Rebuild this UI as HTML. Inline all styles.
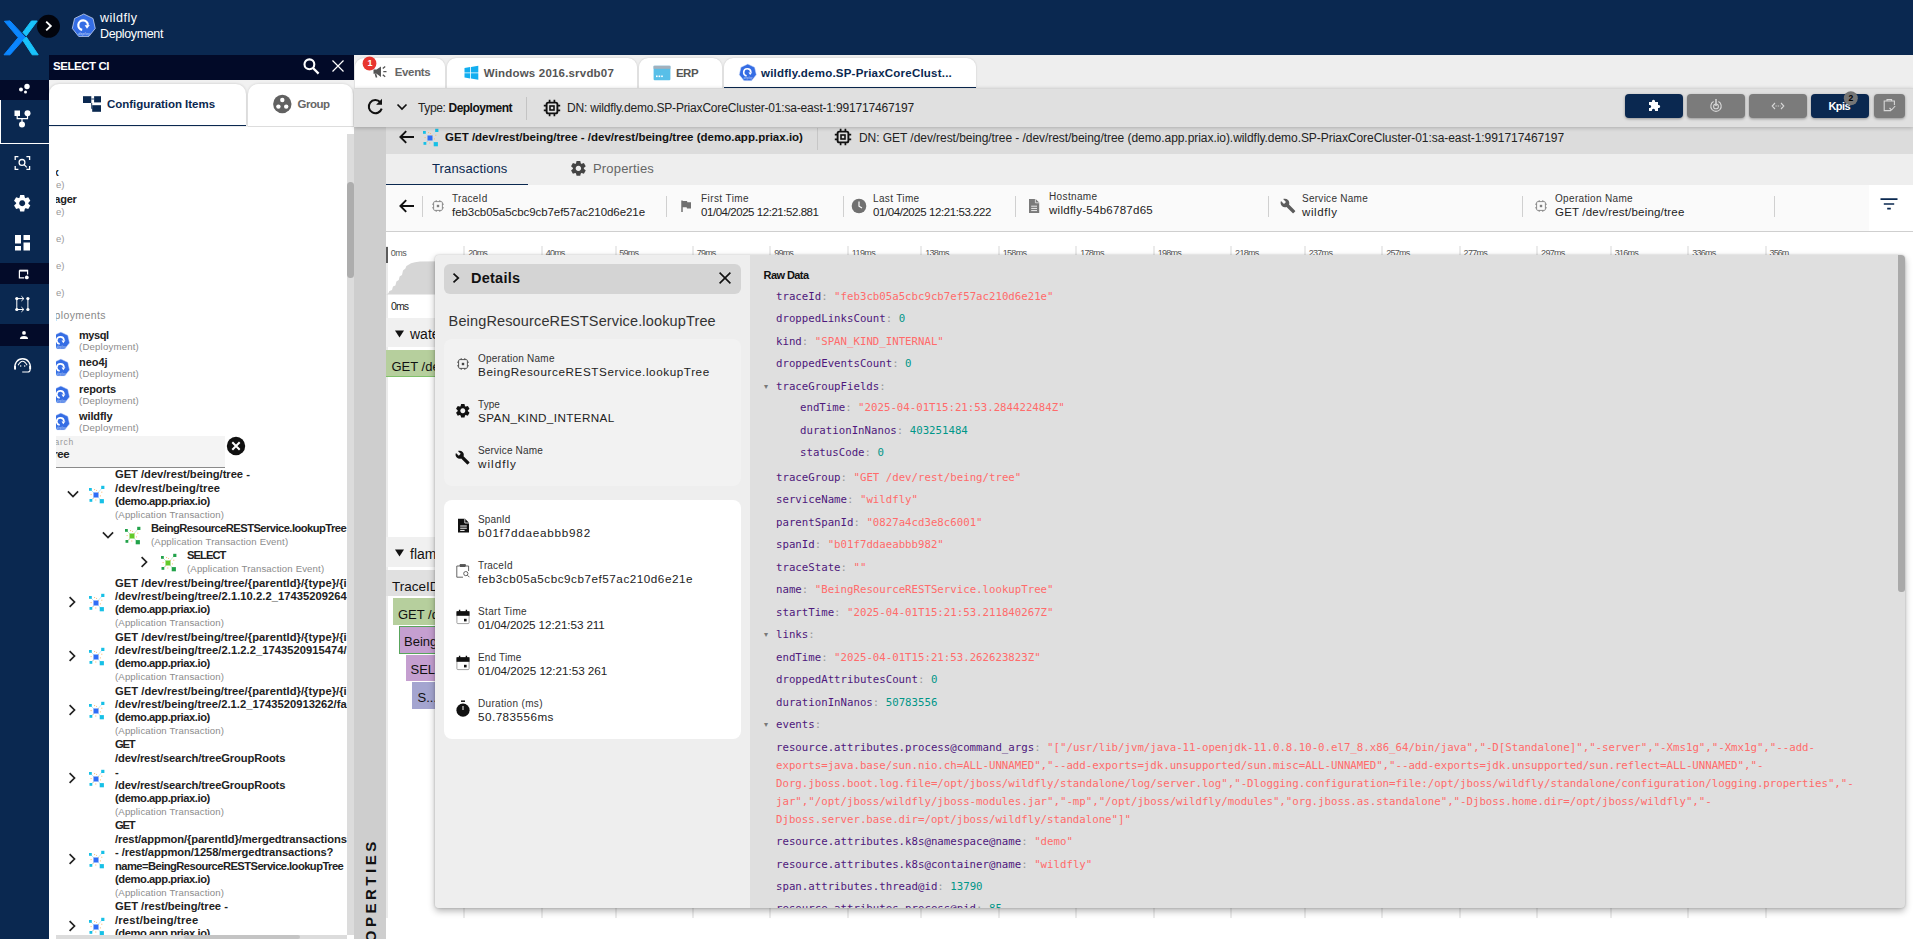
<!DOCTYPE html>
<html lang="en"><head><meta charset="utf-8"><title>wildfly Deployment</title><style>
html,body{margin:0;padding:0}
body{width:1913px;height:939px;overflow:hidden;position:relative;background:#fff;font-family:"Liberation Sans",sans-serif;color:#222}
.a{position:absolute}
.t{position:absolute;white-space:nowrap}
.clip{position:absolute;overflow:hidden}
</style></head><body>
<div class="a" style="left:0px;top:0px;width:1913px;height:55px;background:#0a2850;"></div>
<div class="a" style="left:0px;top:55px;width:49px;height:884px;background:#0a2850;"></div>
<div class="a" style="left:0px;top:79.5px;width:49px;height:20.0px;background:#030b29;"></div>
<div class="a" style="left:0px;top:263px;width:49px;height:21.30000000000001px;background:#030b29;"></div>
<div class="a" style="left:0px;top:324px;width:49px;height:22px;background:#030b29;"></div>
<div class="a" style="left:0px;top:99.5px;width:1px;height:44.5px;background:#fff;"></div>
<div class="a" style="left:0px;top:143px;width:49px;height:1px;background:#fff;"></div>
<svg class="a" style="left:0px;top:16px;" width="44" height="44" viewBox="0 0 44 44"><g stroke-width="1" stroke-linejoin="round"><path d="M4.4 5.3 L10 4.9 L25.4 21.4 L10 38.8 L4 38.8 L18.2 21.6 Z" fill="#0b86ff" stroke="#0b86ff"/><path d="M31.4 5 L37.2 5 L26.2 19.9 L22.9 16.4 Z" fill="#19c3fb" stroke="#19c3fb"/><path d="M22.9 24.4 L26.3 21 L38.2 38.8 L32.2 38.8 Z" fill="#19c3fb" stroke="#19c3fb"/></g></svg>
<svg class="a" style="left:36px;top:14px;" width="25" height="25" viewBox="0 0 25 25"><circle cx="12.5" cy="12.3" r="11.5" fill="#02040c"/><path d="M10.2 7.6 L14.8 12 L10.2 16.4" fill="none" stroke="#fff" stroke-width="1.9"/></svg>
<svg class="a" style="left:70.7px;top:13.2px;" width="25.6" height="25.6" viewBox="0 0 25.6 25.6"><polygon points="12.80,1.00 22.03,5.44 24.30,15.43 17.92,23.43 7.68,23.43 1.30,15.43 3.57,5.44" fill="#356de4" stroke="#dbe5fb" stroke-width="0.70" stroke-linejoin="round"/><g transform="translate(12.8,12.8) scale(1.0000)"><path d="M-1.6 4.1 A4.8 4.8 0 1 1 4.1 -0.9" fill="none" stroke="#fff" stroke-width="2.2"/><path d="M0.9 -0.5 L6 -0.8 L3.2 3 Z" fill="#fff"/><text x="0.2" y="8.9" text-anchor="middle" font-family="Liberation Sans,sans-serif" font-size="3.7" font-weight="700" font-style="italic" fill="#a9c0f3">deploy</text></g></svg>
<div class="t" style="left:100px;top:12.12px;font-size:12.5px;line-height:12.5px;color:#fff;letter-spacing:0.495px;">wildfly</div>
<div class="t" style="left:100px;top:28.12px;font-size:12.5px;line-height:12.5px;color:#fff;letter-spacing:-0.370px;">Deployment</div>
<svg class="a" style="left:14px;top:80px;" width="20" height="18" viewBox="0 0 20 18"><circle cx="13" cy="6.5" r="2.7" fill="#fff"/><circle cx="7" cy="9.5" r="2" fill="#fff"/><circle cx="11.5" cy="12" r="1.5" fill="#fff"/></svg>
<svg class="a" style="left:12px;top:108px;" width="24" height="24" viewBox="0 0 24 24"><rect x="2.5" y="2.5" width="5.5" height="5.5" fill="#fff"/><circle cx="15.5" cy="5.2" r="3" fill="#fff"/><circle cx="10" cy="16.5" r="3" fill="#fff"/><path d="M5.2 8 V10.6 H15.5 V8 M10 10.6 V14" fill="none" stroke="#fff" stroke-width="1.2"/></svg>
<svg class="a" style="left:14px;top:155px;" width="17" height="16" viewBox="0 0 17 16"><g fill="none" stroke="#fff" stroke-width="1.3"><path d="M1.2 5 V1.6 H4.4 M12.4 1.6 H15.6 V5 M15.6 11 V14.4 H12.4 M4.4 14.4 H1.2 V11"/><circle cx="8" cy="7.4" r="2.9"/><path d="M10.1 9.6 L12.8 12.4"/></g></svg>
<svg class="a" style="left:13.3px;top:193.8px;" width="18.4" height="18.4" viewBox="0 0 18.4 18.4"><g transform="translate(9.2,9.2)"><path d="M-2.79 -4.92 L-2.05 -8.20 L2.05 -8.20 L2.79 -4.92 Z" transform="rotate(0)" fill="#fff"/><path d="M-2.79 -4.92 L-2.05 -8.20 L2.05 -8.20 L2.79 -4.92 Z" transform="rotate(60)" fill="#fff"/><path d="M-2.79 -4.92 L-2.05 -8.20 L2.05 -8.20 L2.79 -4.92 Z" transform="rotate(120)" fill="#fff"/><path d="M-2.79 -4.92 L-2.05 -8.20 L2.05 -8.20 L2.79 -4.92 Z" transform="rotate(180)" fill="#fff"/><path d="M-2.79 -4.92 L-2.05 -8.20 L2.05 -8.20 L2.79 -4.92 Z" transform="rotate(240)" fill="#fff"/><path d="M-2.79 -4.92 L-2.05 -8.20 L2.05 -8.20 L2.79 -4.92 Z" transform="rotate(300)" fill="#fff"/><path fill-rule="evenodd" fill="#fff" d="M0 -6.07 A6.07 6.07 0 1 0 0.01 -6.07 Z M0 -2.95 A2.95 2.95 0 1 1 -0.01 -2.95 Z"/></g></svg>
<svg class="a" style="left:14px;top:234px;" width="18" height="18" viewBox="0 0 18 18"><rect x="1" y="1" width="6" height="8.5" fill="#fff"/><rect x="9.5" y="1" width="6.5" height="5" fill="#fff"/><rect x="1" y="12" width="6" height="4.5" fill="#fff"/><rect x="9.5" y="8.5" width="6.5" height="8" fill="#fff"/></svg>
<svg class="a" style="left:18px;top:268.5px;" width="12" height="11" viewBox="0 0 12 11"><path d="M1.4 1.4 H9.6 V5.4 M1.4 1.4 V8.8 H6.2" fill="none" stroke="#fff" stroke-width="1.2"/><rect x="1.4" y="0.9" width="8.2" height="1.7" fill="#fff"/><circle cx="8.8" cy="8.4" r="1.9" fill="#fff"/></svg>
<svg class="a" style="left:13px;top:294px;" width="20" height="20" viewBox="0 0 20 20"><g fill="#fff"><circle cx="3.8" cy="4.6" r="1.6"/><circle cx="3.8" cy="15.5" r="1.6"/><circle cx="14.9" cy="4.6" r="1.6"/><circle cx="14.9" cy="15.5" r="1.6"/></g><g stroke="#fff" fill="none"><path d="M3.8 4.6 V15.5 M14.9 4.6 V15.5" stroke-width="1"/><path d="M3.8 4.6 H10.6 M8.4 2.2 L10.9 4.6 L8.4 7" stroke-width="1"/><path d="M3.8 15.5 H10.6 M8.4 13.1 L10.9 15.5 L8.4 17.9" stroke-width="1"/></g></svg>
<svg class="a" style="left:19px;top:329.5px;" width="10" height="10" viewBox="0 0 10 10"><circle cx="5" cy="2.9" r="1.9" fill="#fff"/><path d="M0.9 9 Q0.9 6 5 6 Q9.1 6 9.1 9 Z" fill="#fff"/></svg>
<svg class="a" style="left:12px;top:355px;" width="22" height="22" viewBox="0 0 22 22"><g fill="none" stroke="#fff"><path d="M3.2 13.6 A7.7 7.7 0 1 1 18 13.6" stroke-width="1.3"/><path d="M6.1 10.3 Q10.6 2.2 15.1 10.3" stroke-width="1.1"/><path d="M18.1 14.4 Q18.1 17 15.8 17 H10.2" stroke-width="1.1"/></g><rect x="2.1" y="10.8" width="1.9" height="4" rx="0.8" fill="#fff"/><rect x="17.2" y="10.8" width="1.9" height="4" rx="0.8" fill="#fff"/><circle cx="8.7" cy="11.1" r="0.75" fill="#fff"/><circle cx="12.7" cy="11.1" r="0.75" fill="#fff"/></svg>
<div class="a" style="left:49px;top:55px;width:305px;height:25px;background:#020a28;"></div>
<div class="t" style="left:53px;top:60.81px;font-size:11.5px;line-height:11.5px;color:#fff;font-weight:700;letter-spacing:-0.451px;">SELECT CI</div>
<svg class="a" style="left:301px;top:57px;" width="20" height="20" viewBox="0 0 20 20"><circle cx="8.4" cy="7.3" r="4.9" fill="none" stroke="#fff" stroke-width="2.1"/><path d="M12 11 L17.6 16.6" stroke="#fff" stroke-width="2.3"/></svg>
<svg class="a" style="left:330px;top:58px;" width="16" height="16" viewBox="0 0 16 16"><path d="M2.5 2.5 L13.5 13.5 M13.5 2.5 L2.5 13.5" stroke="#fff" stroke-width="1.2"/></svg>
<div class="a" style="left:49px;top:80px;width:305px;height:859px;background:#fff;"></div>
<div class="a" style="left:49px;top:80px;width:305px;height:47px;background:#f1f1f1;"></div>
<div class="a" style="left:49px;top:84px;width:197px;height:41px;background:#fff;border-top-right-radius:10px;border-top-left-radius:10px;box-shadow:0 0 3px rgba(0,0,0,.18);"></div>
<div class="a" style="left:49px;top:125px;width:197px;height:1px;background:#0a2850;"></div>
<div class="a" style="left:248px;top:84px;width:105px;height:42px;background:#fff;border-top-left-radius:10px;border-top-right-radius:10px;box-shadow:0 0 3px rgba(0,0,0,.15);"></div>
<div class="a" style="left:248px;top:126px;width:106px;height:1px;background:#ddd;"></div>
<div class="a" style="left:49px;top:127px;width:305px;height:6px;background:#fff;"></div>
<svg class="a" style="left:82px;top:95px;" width="20" height="18" viewBox="0 0 20 18"><rect x="1" y="1.2" width="8.3" height="6.8" fill="#0a2850"/><rect x="12.1" y="1.2" width="6.9" height="6.2" fill="#0a2850"/><rect x="10.2" y="10.2" width="8.8" height="6.6" fill="#0a2850"/><path d="M9.3 4 H12.1 M9.7 8 V13.6 H10.4" fill="none" stroke="#0a2850" stroke-width="0.9"/></svg>
<div class="t" style="left:107px;top:98.81px;font-size:11.5px;line-height:11.5px;color:#0a2850;font-weight:700;letter-spacing:-0.032px;">Configuration Items</div>
<svg class="a" style="left:272px;top:94px;" width="20" height="20" viewBox="0 0 20 20"><circle cx="10.3" cy="10" r="9.2" fill="#616161"/><circle cx="10.3" cy="6" r="2.2" fill="#fff"/><circle cx="6.4" cy="12.6" r="2.2" fill="#fff"/><circle cx="14.2" cy="12.6" r="2.2" fill="#fff"/></svg>
<div class="t" style="left:297.4px;top:98.81px;font-size:11.5px;line-height:11.5px;color:#666;font-weight:700;letter-spacing:-0.459px;">Group</div>
<div class="a" style="left:347px;top:134px;width:7px;height:801px;background:#dcdcdc;"></div>
<div class="a" style="left:347px;top:182px;width:7px;height:96px;background:#adadad;border-radius:3.5px;"></div>
<div class="a" style="left:56px;top:935px;width:291px;height:4px;background:#dcdcdc;"></div>
<div class="a" style="left:184px;top:935px;width:116px;height:4px;background:#c4c4c4;border-radius:2px;"></div>
<div class="clip" style="left:56px;top:130px;width:291px;height:805px;">
<div class="t" style="left:-3.299999999999997px;top:37.10px;font-size:11px;line-height:11px;color:#222;font-weight:700;">x</div>
<div class="t" style="left:0px;top:50.32px;font-size:9.6px;line-height:9.6px;color:#999;">e)</div>
<div class="t" style="left:-1.7000000000000028px;top:64.10px;font-size:11px;line-height:11px;color:#222;font-weight:700;letter-spacing:-0.234px;">ager</div>
<div class="t" style="left:0px;top:77.32px;font-size:9.6px;line-height:9.6px;color:#999;">e)</div>
<div class="t" style="left:0px;top:104.32px;font-size:9.6px;line-height:9.6px;color:#999;">e)</div>
<div class="t" style="left:0px;top:131.32px;font-size:9.6px;line-height:9.6px;color:#999;">e)</div>
<div class="t" style="left:0px;top:158.32px;font-size:9.6px;line-height:9.6px;color:#999;">e)</div>
<div class="t" style="left:-1.3999999999999986px;top:179.69px;font-size:10.5px;line-height:10.5px;color:#888;letter-spacing:0.372px;">ployments</div>
<div class="t" style="left:23px;top:199.80px;font-size:11px;line-height:11px;color:#222;font-weight:700;letter-spacing:-0.458px;">mysql</div>
<div class="t" style="left:23px;top:212.12px;font-size:9.6px;line-height:9.6px;color:#8c8c8c;letter-spacing:0.198px;">(Deployment)</div>
<div class="t" style="left:23px;top:226.80px;font-size:11px;line-height:11px;color:#222;font-weight:700;letter-spacing:-0.046px;">neo4j</div>
<div class="t" style="left:23px;top:239.12px;font-size:9.6px;line-height:9.6px;color:#8c8c8c;letter-spacing:0.198px;">(Deployment)</div>
<div class="t" style="left:23px;top:253.80px;font-size:11px;line-height:11px;color:#222;font-weight:700;letter-spacing:-0.128px;">reports</div>
<div class="t" style="left:23px;top:266.12px;font-size:9.6px;line-height:9.6px;color:#8c8c8c;letter-spacing:0.198px;">(Deployment)</div>
<div class="t" style="left:23px;top:280.80px;font-size:11px;line-height:11px;color:#222;font-weight:700;letter-spacing:-0.104px;">wildfly</div>
<div class="t" style="left:23px;top:293.12px;font-size:9.6px;line-height:9.6px;color:#8c8c8c;letter-spacing:0.198px;">(Deployment)</div>
</div>
<div class="clip" style="left:56px;top:325px;width:20px;height:115px;">
<svg class="a" style="left:-5.100000000000003px;top:6.1px;" width="19.8" height="19.8" viewBox="0 0 19.8 19.8"><polygon points="9.90,1.00 16.86,4.35 18.58,11.88 13.76,17.92 6.04,17.92 1.22,11.88 2.94,4.35" fill="#356de4" stroke="#dbe5fb" stroke-width="0.53" stroke-linejoin="round"/><g transform="translate(9.9,9.9) scale(0.7542)"><path d="M-1.6 4.1 A4.8 4.8 0 1 1 4.1 -0.9" fill="none" stroke="#fff" stroke-width="2.2"/><path d="M0.9 -0.5 L6 -0.8 L3.2 3 Z" fill="#fff"/><text x="0.2" y="8.9" text-anchor="middle" font-family="Liberation Sans,sans-serif" font-size="3.7" font-weight="700" font-style="italic" fill="#a9c0f3">deploy</text></g></svg>
<svg class="a" style="left:-5.100000000000003px;top:33.1px;" width="19.8" height="19.8" viewBox="0 0 19.8 19.8"><polygon points="9.90,1.00 16.86,4.35 18.58,11.88 13.76,17.92 6.04,17.92 1.22,11.88 2.94,4.35" fill="#356de4" stroke="#dbe5fb" stroke-width="0.53" stroke-linejoin="round"/><g transform="translate(9.9,9.9) scale(0.7542)"><path d="M-1.6 4.1 A4.8 4.8 0 1 1 4.1 -0.9" fill="none" stroke="#fff" stroke-width="2.2"/><path d="M0.9 -0.5 L6 -0.8 L3.2 3 Z" fill="#fff"/><text x="0.2" y="8.9" text-anchor="middle" font-family="Liberation Sans,sans-serif" font-size="3.7" font-weight="700" font-style="italic" fill="#a9c0f3">deploy</text></g></svg>
<svg class="a" style="left:-5.100000000000003px;top:60.1px;" width="19.8" height="19.8" viewBox="0 0 19.8 19.8"><polygon points="9.90,1.00 16.86,4.35 18.58,11.88 13.76,17.92 6.04,17.92 1.22,11.88 2.94,4.35" fill="#356de4" stroke="#dbe5fb" stroke-width="0.53" stroke-linejoin="round"/><g transform="translate(9.9,9.9) scale(0.7542)"><path d="M-1.6 4.1 A4.8 4.8 0 1 1 4.1 -0.9" fill="none" stroke="#fff" stroke-width="2.2"/><path d="M0.9 -0.5 L6 -0.8 L3.2 3 Z" fill="#fff"/><text x="0.2" y="8.9" text-anchor="middle" font-family="Liberation Sans,sans-serif" font-size="3.7" font-weight="700" font-style="italic" fill="#a9c0f3">deploy</text></g></svg>
<svg class="a" style="left:-5.100000000000003px;top:87.1px;" width="19.8" height="19.8" viewBox="0 0 19.8 19.8"><polygon points="9.90,1.00 16.86,4.35 18.58,11.88 13.76,17.92 6.04,17.92 1.22,11.88 2.94,4.35" fill="#356de4" stroke="#dbe5fb" stroke-width="0.53" stroke-linejoin="round"/><g transform="translate(9.9,9.9) scale(0.7542)"><path d="M-1.6 4.1 A4.8 4.8 0 1 1 4.1 -0.9" fill="none" stroke="#fff" stroke-width="2.2"/><path d="M0.9 -0.5 L6 -0.8 L3.2 3 Z" fill="#fff"/><text x="0.2" y="8.9" text-anchor="middle" font-family="Liberation Sans,sans-serif" font-size="3.7" font-weight="700" font-style="italic" fill="#a9c0f3">deploy</text></g></svg>
</div>
<div class="a" style="left:56px;top:436px;width:169px;height:31px;background:#f4f4f4;"></div>
<div class="a" style="left:56px;top:467px;width:169px;height:1px;background:#8a8a8a;"></div>
<div class="clip" style="left:56px;top:436px;width:169px;height:31px;">
<div class="t" style="left:-1.3999999999999986px;top:2.46px;font-size:8.5px;line-height:8.5px;color:#999;letter-spacing:0.716px;">arch</div>
<div class="t" style="left:-2.700000000000003px;top:12.81px;font-size:11.5px;line-height:11.5px;color:#222;font-weight:700;letter-spacing:-0.422px;">ree</div>
</div>
<svg class="a" style="left:226px;top:436px;" width="20" height="20" viewBox="0 0 20 20"><circle cx="10" cy="10" r="9.2" fill="#111"/><path d="M6.3 6.3 L13.7 13.7 M13.7 6.3 L6.3 13.7" stroke="#fff" stroke-width="2"/></svg>
<div class="clip" style="left:49px;top:468px;width:298px;height:467px;">
<svg class="a" style="left:16.5px;top:18.899999999999977px;" width="14" height="14" viewBox="0 0 14 14"><path d="M1.9 4.4 L7 9.5 L12.1 4.4" fill="none" stroke="#222" stroke-width="1.7"/></svg>
<svg class="a" style="left:36.80000000000001px;top:17.399999999999977px;" width="20" height="20" viewBox="0 0 20 20"><g stroke="#aee3f6" stroke-width="0.8"><path d="M10 10 L4.4 4.4 M10 10 L16.8 2.2 M10 10 L4.9 15.4 M10 10 L15.8 16.2"/></g><g fill="#17c0e6"><rect x="3.00" y="3.00" width="2.8" height="2.8"/><rect x="15.20" y="0.80" width="3.2" height="3.2"/><rect x="3.50" y="14.00" width="2.8" height="2.8"/><rect x="13.70" y="14.10" width="4.2" height="4.2"/></g><g fill="#2f6df6"><rect x="7.50" y="7.50" width="5" height="5"/></g><g fill="#f9b56b"><rect x="8.10" y="4.10" width="1" height="1"/><rect x="10.15" y="4.95" width="0.9" height="0.9"/><rect x="4.60" y="9.10" width="1" height="1"/><rect x="15.30" y="6.70" width="1" height="1"/><rect x="13.90" y="10.40" width="1" height="1"/><rect x="9.30" y="14.50" width="1" height="1"/><rect x="6.80" y="13.20" width="0.8" height="0.8"/><rect x="12.20" y="7.00" width="0.8" height="0.8"/></g></svg>
<div class="t" style="left:66px;top:1.48px;font-size:11.2px;line-height:11.2px;color:#222;font-weight:700;letter-spacing:-0.026px;">GET /dev/rest/being/tree -</div>
<div class="t" style="left:66px;top:15.28px;font-size:11.2px;line-height:11.2px;color:#222;font-weight:700;letter-spacing:0.130px;">/dev/rest/being/tree</div>
<div class="t" style="left:66px;top:28.38px;font-size:11.2px;line-height:11.2px;color:#222;font-weight:700;letter-spacing:-0.437px;">(demo.app.priax.io)</div>
<div class="t" style="left:66px;top:41.92px;font-size:9.6px;line-height:9.6px;color:#8c8c8c;letter-spacing:0.142px;">(Application Transaction)</div>
<svg class="a" style="left:52.3px;top:59.89999999999998px;" width="14" height="14" viewBox="0 0 14 14"><path d="M1.9 4.4 L7 9.5 L12.1 4.4" fill="none" stroke="#222" stroke-width="1.7"/></svg>
<svg class="a" style="left:73.4px;top:57.5px;" width="20" height="20" viewBox="0 0 20 20"><g stroke="#b9e6c0" stroke-width="0.8"><path d="M10 10 L4.4 4.4 M10 10 L16.8 2.2 M10 10 L4.9 15.4 M10 10 L15.8 16.2"/></g><g fill="#22a24a"><rect x="3.00" y="3.00" width="2.8" height="2.8"/><rect x="15.20" y="0.80" width="3.2" height="3.2"/><rect x="3.50" y="14.00" width="2.8" height="2.8"/><rect x="13.70" y="14.10" width="4.2" height="4.2"/></g><g fill="#63c928"><rect x="7.50" y="7.50" width="5" height="5"/></g><g fill="#f9b56b"><rect x="8.10" y="4.10" width="1" height="1"/><rect x="10.15" y="4.95" width="0.9" height="0.9"/><rect x="4.60" y="9.10" width="1" height="1"/><rect x="15.30" y="6.70" width="1" height="1"/><rect x="13.90" y="10.40" width="1" height="1"/><rect x="9.30" y="14.50" width="1" height="1"/><rect x="6.80" y="13.20" width="0.8" height="0.8"/><rect x="12.20" y="7.00" width="0.8" height="0.8"/></g></svg>
<div class="t" style="left:102px;top:55.48px;font-size:11.2px;line-height:11.2px;color:#222;font-weight:700;letter-spacing:-0.556px;">BeingResourceRESTService.lookupTree</div>
<div class="t" style="left:102px;top:68.72px;font-size:9.6px;line-height:9.6px;color:#8c8c8c;letter-spacing:0.143px;">(Application Transaction Event)</div>
<svg class="a" style="left:88.30000000000001px;top:87.20000000000005px;" width="14" height="14" viewBox="0 0 14 14"><path d="M4.6 2.2 L9.5 7 L4.6 11.8" fill="none" stroke="#222" stroke-width="1.7"/></svg>
<svg class="a" style="left:109.1px;top:84.70000000000005px;" width="20" height="20" viewBox="0 0 20 20"><g stroke="#b9e6c0" stroke-width="0.8"><path d="M10 10 L4.4 4.4 M10 10 L16.8 2.2 M10 10 L4.9 15.4 M10 10 L15.8 16.2"/></g><g fill="#22a24a"><rect x="3.00" y="3.00" width="2.8" height="2.8"/><rect x="15.20" y="0.80" width="3.2" height="3.2"/><rect x="3.50" y="14.00" width="2.8" height="2.8"/><rect x="13.70" y="14.10" width="4.2" height="4.2"/></g><g fill="#63c928"><rect x="7.50" y="7.50" width="5" height="5"/></g><g fill="#f9b56b"><rect x="8.10" y="4.10" width="1" height="1"/><rect x="10.15" y="4.95" width="0.9" height="0.9"/><rect x="4.60" y="9.10" width="1" height="1"/><rect x="15.30" y="6.70" width="1" height="1"/><rect x="13.90" y="10.40" width="1" height="1"/><rect x="9.30" y="14.50" width="1" height="1"/><rect x="6.80" y="13.20" width="0.8" height="0.8"/><rect x="12.20" y="7.00" width="0.8" height="0.8"/></g></svg>
<div class="t" style="left:138px;top:82.48px;font-size:11.2px;line-height:11.2px;color:#222;font-weight:700;letter-spacing:-0.947px;">SELECT</div>
<div class="t" style="left:138px;top:95.82px;font-size:9.6px;line-height:9.6px;color:#8c8c8c;letter-spacing:0.143px;">(Application Transaction Event)</div>
<svg class="a" style="left:16.0px;top:126.89999999999998px;" width="14" height="14" viewBox="0 0 14 14"><path d="M4.6 2.2 L9.5 7 L4.6 11.8" fill="none" stroke="#222" stroke-width="1.7"/></svg>
<svg class="a" style="left:37.0px;top:125px;" width="20" height="20" viewBox="0 0 20 20"><g stroke="#aee3f6" stroke-width="0.8"><path d="M10 10 L4.4 4.4 M10 10 L16.8 2.2 M10 10 L4.9 15.4 M10 10 L15.8 16.2"/></g><g fill="#17c0e6"><rect x="3.00" y="3.00" width="2.8" height="2.8"/><rect x="15.20" y="0.80" width="3.2" height="3.2"/><rect x="3.50" y="14.00" width="2.8" height="2.8"/><rect x="13.70" y="14.10" width="4.2" height="4.2"/></g><g fill="#2f6df6"><rect x="7.50" y="7.50" width="5" height="5"/></g><g fill="#f9b56b"><rect x="8.10" y="4.10" width="1" height="1"/><rect x="10.15" y="4.95" width="0.9" height="0.9"/><rect x="4.60" y="9.10" width="1" height="1"/><rect x="15.30" y="6.70" width="1" height="1"/><rect x="13.90" y="10.40" width="1" height="1"/><rect x="9.30" y="14.50" width="1" height="1"/><rect x="6.80" y="13.20" width="0.8" height="0.8"/><rect x="12.20" y="7.00" width="0.8" height="0.8"/></g></svg>
<div class="t" style="left:66px;top:109.58px;font-size:11.2px;line-height:11.2px;color:#222;font-weight:700;letter-spacing:0.038px;">GET /dev/rest/being/tree/{parentId}/{type}/{i</div>
<div class="t" style="left:66px;top:123.38px;font-size:11.2px;line-height:11.2px;color:#222;font-weight:700;letter-spacing:0.038px;">/dev/rest/being/tree/2.1.10.2.2_17435209264</div>
<div class="t" style="left:66px;top:136.28px;font-size:11.2px;line-height:11.2px;color:#222;font-weight:700;letter-spacing:-0.437px;">(demo.app.priax.io)</div>
<div class="t" style="left:66px;top:149.82px;font-size:9.6px;line-height:9.6px;color:#8c8c8c;letter-spacing:0.142px;">(Application Transaction)</div>
<svg class="a" style="left:16.0px;top:180.89999999999998px;" width="14" height="14" viewBox="0 0 14 14"><path d="M4.6 2.2 L9.5 7 L4.6 11.8" fill="none" stroke="#222" stroke-width="1.7"/></svg>
<svg class="a" style="left:37.0px;top:179px;" width="20" height="20" viewBox="0 0 20 20"><g stroke="#aee3f6" stroke-width="0.8"><path d="M10 10 L4.4 4.4 M10 10 L16.8 2.2 M10 10 L4.9 15.4 M10 10 L15.8 16.2"/></g><g fill="#17c0e6"><rect x="3.00" y="3.00" width="2.8" height="2.8"/><rect x="15.20" y="0.80" width="3.2" height="3.2"/><rect x="3.50" y="14.00" width="2.8" height="2.8"/><rect x="13.70" y="14.10" width="4.2" height="4.2"/></g><g fill="#2f6df6"><rect x="7.50" y="7.50" width="5" height="5"/></g><g fill="#f9b56b"><rect x="8.10" y="4.10" width="1" height="1"/><rect x="10.15" y="4.95" width="0.9" height="0.9"/><rect x="4.60" y="9.10" width="1" height="1"/><rect x="15.30" y="6.70" width="1" height="1"/><rect x="13.90" y="10.40" width="1" height="1"/><rect x="9.30" y="14.50" width="1" height="1"/><rect x="6.80" y="13.20" width="0.8" height="0.8"/><rect x="12.20" y="7.00" width="0.8" height="0.8"/></g></svg>
<div class="t" style="left:66px;top:163.58px;font-size:11.2px;line-height:11.2px;color:#222;font-weight:700;letter-spacing:0.038px;">GET /dev/rest/being/tree/{parentId}/{type}/{i</div>
<div class="t" style="left:66px;top:177.38px;font-size:11.2px;line-height:11.2px;color:#222;font-weight:700;letter-spacing:0.038px;">/dev/rest/being/tree/2.1.2.2_1743520915474/</div>
<div class="t" style="left:66px;top:190.28px;font-size:11.2px;line-height:11.2px;color:#222;font-weight:700;letter-spacing:-0.437px;">(demo.app.priax.io)</div>
<div class="t" style="left:66px;top:203.82px;font-size:9.6px;line-height:9.6px;color:#8c8c8c;letter-spacing:0.142px;">(Application Transaction)</div>
<svg class="a" style="left:16.0px;top:234.89999999999998px;" width="14" height="14" viewBox="0 0 14 14"><path d="M4.6 2.2 L9.5 7 L4.6 11.8" fill="none" stroke="#222" stroke-width="1.7"/></svg>
<svg class="a" style="left:37.0px;top:233px;" width="20" height="20" viewBox="0 0 20 20"><g stroke="#aee3f6" stroke-width="0.8"><path d="M10 10 L4.4 4.4 M10 10 L16.8 2.2 M10 10 L4.9 15.4 M10 10 L15.8 16.2"/></g><g fill="#17c0e6"><rect x="3.00" y="3.00" width="2.8" height="2.8"/><rect x="15.20" y="0.80" width="3.2" height="3.2"/><rect x="3.50" y="14.00" width="2.8" height="2.8"/><rect x="13.70" y="14.10" width="4.2" height="4.2"/></g><g fill="#2f6df6"><rect x="7.50" y="7.50" width="5" height="5"/></g><g fill="#f9b56b"><rect x="8.10" y="4.10" width="1" height="1"/><rect x="10.15" y="4.95" width="0.9" height="0.9"/><rect x="4.60" y="9.10" width="1" height="1"/><rect x="15.30" y="6.70" width="1" height="1"/><rect x="13.90" y="10.40" width="1" height="1"/><rect x="9.30" y="14.50" width="1" height="1"/><rect x="6.80" y="13.20" width="0.8" height="0.8"/><rect x="12.20" y="7.00" width="0.8" height="0.8"/></g></svg>
<div class="t" style="left:66px;top:217.58px;font-size:11.2px;line-height:11.2px;color:#222;font-weight:700;letter-spacing:0.038px;">GET /dev/rest/being/tree/{parentId}/{type}/{i</div>
<div class="t" style="left:66px;top:231.38px;font-size:11.2px;line-height:11.2px;color:#222;font-weight:700;letter-spacing:0.023px;">/dev/rest/being/tree/2.1.2_1743520913262/fa</div>
<div class="t" style="left:66px;top:244.28px;font-size:11.2px;line-height:11.2px;color:#222;font-weight:700;letter-spacing:-0.437px;">(demo.app.priax.io)</div>
<div class="t" style="left:66px;top:257.82px;font-size:9.6px;line-height:9.6px;color:#8c8c8c;letter-spacing:0.142px;">(Application Transaction)</div>
<svg class="a" style="left:16.0px;top:302.9px;" width="14" height="14" viewBox="0 0 14 14"><path d="M4.6 2.2 L9.5 7 L4.6 11.8" fill="none" stroke="#222" stroke-width="1.7"/></svg>
<svg class="a" style="left:37.0px;top:301px;" width="20" height="20" viewBox="0 0 20 20"><g stroke="#aee3f6" stroke-width="0.8"><path d="M10 10 L4.4 4.4 M10 10 L16.8 2.2 M10 10 L4.9 15.4 M10 10 L15.8 16.2"/></g><g fill="#17c0e6"><rect x="3.00" y="3.00" width="2.8" height="2.8"/><rect x="15.20" y="0.80" width="3.2" height="3.2"/><rect x="3.50" y="14.00" width="2.8" height="2.8"/><rect x="13.70" y="14.10" width="4.2" height="4.2"/></g><g fill="#2f6df6"><rect x="7.50" y="7.50" width="5" height="5"/></g><g fill="#f9b56b"><rect x="8.10" y="4.10" width="1" height="1"/><rect x="10.15" y="4.95" width="0.9" height="0.9"/><rect x="4.60" y="9.10" width="1" height="1"/><rect x="15.30" y="6.70" width="1" height="1"/><rect x="13.90" y="10.40" width="1" height="1"/><rect x="9.30" y="14.50" width="1" height="1"/><rect x="6.80" y="13.20" width="0.8" height="0.8"/><rect x="12.20" y="7.00" width="0.8" height="0.8"/></g></svg>
<div class="t" style="left:66px;top:271.48px;font-size:11.2px;line-height:11.2px;color:#222;font-weight:700;letter-spacing:-1.241px;">GET</div>
<div class="t" style="left:66px;top:285.48px;font-size:11.2px;line-height:11.2px;color:#222;font-weight:700;letter-spacing:-0.122px;">/dev/rest/search/treeGroupRoots</div>
<div class="t" style="left:66px;top:298.68px;font-size:11.2px;line-height:11.2px;color:#222;font-weight:700;">-</div>
<div class="t" style="left:66px;top:312.48px;font-size:11.2px;line-height:11.2px;color:#222;font-weight:700;letter-spacing:-0.122px;">/dev/rest/search/treeGroupRoots</div>
<div class="t" style="left:66px;top:325.38px;font-size:11.2px;line-height:11.2px;color:#222;font-weight:700;letter-spacing:-0.437px;">(demo.app.priax.io)</div>
<div class="t" style="left:66px;top:338.92px;font-size:9.6px;line-height:9.6px;color:#8c8c8c;letter-spacing:0.142px;">(Application Transaction)</div>
<svg class="a" style="left:16.0px;top:384px;" width="14" height="14" viewBox="0 0 14 14"><path d="M4.6 2.2 L9.5 7 L4.6 11.8" fill="none" stroke="#222" stroke-width="1.7"/></svg>
<svg class="a" style="left:37.0px;top:382px;" width="20" height="20" viewBox="0 0 20 20"><g stroke="#aee3f6" stroke-width="0.8"><path d="M10 10 L4.4 4.4 M10 10 L16.8 2.2 M10 10 L4.9 15.4 M10 10 L15.8 16.2"/></g><g fill="#17c0e6"><rect x="3.00" y="3.00" width="2.8" height="2.8"/><rect x="15.20" y="0.80" width="3.2" height="3.2"/><rect x="3.50" y="14.00" width="2.8" height="2.8"/><rect x="13.70" y="14.10" width="4.2" height="4.2"/></g><g fill="#2f6df6"><rect x="7.50" y="7.50" width="5" height="5"/></g><g fill="#f9b56b"><rect x="8.10" y="4.10" width="1" height="1"/><rect x="10.15" y="4.95" width="0.9" height="0.9"/><rect x="4.60" y="9.10" width="1" height="1"/><rect x="15.30" y="6.70" width="1" height="1"/><rect x="13.90" y="10.40" width="1" height="1"/><rect x="9.30" y="14.50" width="1" height="1"/><rect x="6.80" y="13.20" width="0.8" height="0.8"/><rect x="12.20" y="7.00" width="0.8" height="0.8"/></g></svg>
<div class="t" style="left:66px;top:352.38px;font-size:11.2px;line-height:11.2px;color:#222;font-weight:700;letter-spacing:-1.241px;">GET</div>
<div class="t" style="left:66px;top:366.38px;font-size:11.2px;line-height:11.2px;color:#222;font-weight:700;letter-spacing:-0.107px;">/rest/appmon/{parentId}/mergedtransactions</div>
<div class="t" style="left:66px;top:379.38px;font-size:11.2px;line-height:11.2px;color:#222;font-weight:700;letter-spacing:-0.095px;">- /rest/appmon/1258/mergedtransactions?</div>
<div class="t" style="left:66px;top:393.38px;font-size:11.2px;line-height:11.2px;color:#222;font-weight:700;letter-spacing:-0.551px;">name=BeingResourceRESTService.lookupTree</div>
<div class="t" style="left:66px;top:406.28px;font-size:11.2px;line-height:11.2px;color:#222;font-weight:700;letter-spacing:-0.437px;">(demo.app.priax.io)</div>
<div class="t" style="left:66px;top:419.82px;font-size:9.6px;line-height:9.6px;color:#8c8c8c;letter-spacing:0.142px;">(Application Transaction)</div>
<svg class="a" style="left:16.0px;top:451px;" width="14" height="14" viewBox="0 0 14 14"><path d="M4.6 2.2 L9.5 7 L4.6 11.8" fill="none" stroke="#222" stroke-width="1.7"/></svg>
<svg class="a" style="left:37.0px;top:449px;" width="20" height="20" viewBox="0 0 20 20"><g stroke="#aee3f6" stroke-width="0.8"><path d="M10 10 L4.4 4.4 M10 10 L16.8 2.2 M10 10 L4.9 15.4 M10 10 L15.8 16.2"/></g><g fill="#17c0e6"><rect x="3.00" y="3.00" width="2.8" height="2.8"/><rect x="15.20" y="0.80" width="3.2" height="3.2"/><rect x="3.50" y="14.00" width="2.8" height="2.8"/><rect x="13.70" y="14.10" width="4.2" height="4.2"/></g><g fill="#2f6df6"><rect x="7.50" y="7.50" width="5" height="5"/></g><g fill="#f9b56b"><rect x="8.10" y="4.10" width="1" height="1"/><rect x="10.15" y="4.95" width="0.9" height="0.9"/><rect x="4.60" y="9.10" width="1" height="1"/><rect x="15.30" y="6.70" width="1" height="1"/><rect x="13.90" y="10.40" width="1" height="1"/><rect x="9.30" y="14.50" width="1" height="1"/><rect x="6.80" y="13.20" width="0.8" height="0.8"/><rect x="12.20" y="7.00" width="0.8" height="0.8"/></g></svg>
<div class="t" style="left:66px;top:433.28px;font-size:11.2px;line-height:11.2px;color:#222;font-weight:700;letter-spacing:-0.012px;">GET /rest/being/tree -</div>
<div class="t" style="left:66px;top:447.28px;font-size:11.2px;line-height:11.2px;color:#222;font-weight:700;letter-spacing:0.200px;">/rest/being/tree</div>
<div class="t" style="left:66px;top:460.18px;font-size:11.2px;line-height:11.2px;color:#222;font-weight:700;letter-spacing:-0.437px;">(demo.app.priax.io)</div>
</div>
<div class="a" style="left:354px;top:55px;width:1559px;height:33px;background:#eeeeee;"></div>
<div class="a" style="left:355px;top:57.5px;width:90px;height:30.5px;background:#fff;border-top-left-radius:9px;border-top-right-radius:9px;box-shadow:0 0 2px rgba(0,0,0,.18);"></div>
<div class="a" style="left:447px;top:57.5px;width:190px;height:30.5px;background:#fff;border-top-left-radius:9px;border-top-right-radius:9px;box-shadow:0 0 2px rgba(0,0,0,.18);"></div>
<div class="a" style="left:639px;top:57.5px;width:83px;height:30.5px;background:#fff;border-top-left-radius:9px;border-top-right-radius:9px;box-shadow:0 0 2px rgba(0,0,0,.18);"></div>
<div class="a" style="left:724px;top:57.5px;width:252px;height:30.5px;background:#fff;border-top-left-radius:9px;border-top-right-radius:9px;box-shadow:0 0 2px rgba(0,0,0,.18);"></div>
<div class="a" style="left:724px;top:86.6px;width:252px;height:1.4px;background:#0a2850;"></div>
<svg class="a" style="left:372px;top:64px;" width="18" height="16" viewBox="0 0 18 16"><path d="M1.5 5.6 H4.6 L9 2.4 V13 L4.6 9.8 H1.5 Z" fill="#555"/><path d="M3.5 10 L4.6 13.6" stroke="#555" stroke-width="1.6"/><g stroke="#555" stroke-width="1.3"><path d="M11.3 7.7 H14.5 M10.8 4.6 L13.2 2.6 M10.8 10.8 L13.2 12.8"/></g></svg>
<svg class="a" style="left:362.4px;top:55.6px;" width="15" height="15" viewBox="0 0 15 15"><circle cx="7.5" cy="7.5" r="6.9" fill="#e8352f"/></svg>
<div class="t" style="left:367.6px;top:58.97px;font-size:9px;line-height:9px;color:#fff;font-weight:700;">1</div>
<div class="t" style="left:394.7px;top:66.91px;font-size:11.5px;line-height:11.5px;color:#666;font-weight:700;letter-spacing:-0.336px;">Events</div>
<svg class="a" style="left:464px;top:65px;" width="15" height="16" viewBox="0 0 15 16"><g fill="#12aef0"><path d="M0.5 3 L6.2 2.1 V7.4 H0.5 Z"/><path d="M7 2 L14.3 0.8 V7.4 H7 Z"/><path d="M0.5 8.2 H6.2 V13.5 L0.5 12.6 Z"/><path d="M7 8.2 H14.3 V14.8 L7 13.6 Z"/></g></svg>
<div class="t" style="left:483.7px;top:67.51px;font-size:11.5px;line-height:11.5px;color:#555;font-weight:700;letter-spacing:0.193px;">Windows 2016.srvdb07</div>
<svg class="a" style="left:653px;top:65px;" width="18" height="16" viewBox="0 0 18 16"><rect x="0.6" y="0.8" width="16.8" height="14.4" rx="1" fill="#58bfe8"/><rect x="0.6" y="0.8" width="16.8" height="3" fill="#a3b0bc"/><rect x="3" y="10.5" width="1.6" height="1.6" fill="#fff"/><rect x="5.6" y="10.5" width="1.6" height="1.6" fill="#fff"/><rect x="8.2" y="10.5" width="1.6" height="1.6" fill="#fff"/></svg>
<div class="t" style="left:676px;top:67.51px;font-size:11.5px;line-height:11.5px;color:#555;font-weight:700;letter-spacing:-0.549px;">ERP</div>
<svg class="a" style="left:737.9000000000001px;top:63.10000000000001px;" width="19.6" height="19.6" viewBox="0 0 19.6 19.6"><polygon points="9.80,1.00 16.68,4.31 18.38,11.76 13.62,17.73 5.98,17.73 1.22,11.76 2.92,4.31" fill="#356de4" stroke="#dbe5fb" stroke-width="0.52" stroke-linejoin="round"/><g transform="translate(9.8,9.8) scale(0.7458)"><path d="M-1.6 4.1 A4.8 4.8 0 1 1 4.1 -0.9" fill="none" stroke="#fff" stroke-width="2.2"/><path d="M0.9 -0.5 L6 -0.8 L3.2 3 Z" fill="#fff"/><text x="0.2" y="8.9" text-anchor="middle" font-family="Liberation Sans,sans-serif" font-size="3.7" font-weight="700" font-style="italic" fill="#a9c0f3">deploy</text></g></svg>
<div class="t" style="left:761px;top:67.51px;font-size:11.5px;line-height:11.5px;color:#0a2850;font-weight:700;letter-spacing:0.217px;">wildfly.demo.SP-PriaxCoreClust...</div>
<div class="a" style="left:354px;top:88px;width:1559px;height:39px;background:#e0e0e0;box-shadow:0 1px 4px rgba(0,0,0,.22);z-index:3;"></div>
<div class="a" style="left:0;top:0;z-index:4;">
<div class="a" style="left:354px;top:88px;width:1559px;height:1px;background:#d8d8d8;"></div>
<svg class="a" style="left:365px;top:97px;" width="20" height="20" viewBox="0 0 20 20"><path d="M15.3 5.2 A6.6 6.6 0 1 0 16.7 11.6" fill="none" stroke="#111" stroke-width="2"/><path d="M17 1.8 V7.7 H11.1 Z" fill="#111"/></svg>
<svg class="a" style="left:395px;top:101px;" width="14" height="12" viewBox="0 0 14 12"><path d="M2.5 3.5 L7 8 L11.5 3.5" fill="none" stroke="#111" stroke-width="1.7"/></svg>
<div class="t" style="left:418px;top:102.41px;font-size:12px;line-height:12px;color:#222;letter-spacing:-0.370px;">Type:</div>
<div class="t" style="left:448.5px;top:102.41px;font-size:12px;line-height:12px;color:#111;font-weight:700;letter-spacing:-0.518px;">Deployment</div>
<div class="a" style="left:526px;top:97px;width:1px;height:23px;background:#c4c4c4;"></div>
<svg class="a" style="left:542.5px;top:99px;" width="18" height="18" viewBox="0 0 18 18"><rect x="3.6" y="3.6" width="10.8" height="10.8" rx="1.6" fill="none" stroke="#111" stroke-width="1.9"/><rect x="7" y="7" width="4" height="4" fill="none" stroke="#111" stroke-width="1.6"/><g stroke="#111" stroke-width="1.7"><path d="M6.6 0.8 V3.4 M11.4 0.8 V3.4 M6.6 14.6 V17.2 M11.4 14.6 V17.2 M0.8 6.6 H3.4 M0.8 11.4 H3.4 M14.6 6.6 H17.2 M14.6 11.4 H17.2"/></g></svg>
<div class="t" style="left:567px;top:102.41px;font-size:12px;line-height:12px;color:#222;letter-spacing:-0.177px;">DN: wildfly.demo.SP-PriaxCoreCluster-01:sa-east-1:991717467197</div>
<div class="a" style="left:1625px;top:94px;width:58px;height:24px;background:#0a2850;border-radius:4px;box-shadow:0 1px 3px rgba(0,0,0,.35);"></div>
<div class="a" style="left:1687px;top:94px;width:58px;height:24px;background:#7b7b7b;border-radius:4px;box-shadow:0 1px 3px rgba(0,0,0,.35);"></div>
<div class="a" style="left:1749px;top:94px;width:58px;height:24px;background:#7b7b7b;border-radius:4px;box-shadow:0 1px 3px rgba(0,0,0,.35);"></div>
<div class="a" style="left:1811px;top:94px;width:58px;height:24px;background:#0a2850;border-radius:4px;box-shadow:0 1px 3px rgba(0,0,0,.35);"></div>
<div class="a" style="left:1874px;top:94px;width:31px;height:24px;background:#7b7b7b;border-radius:4px;box-shadow:0 1px 3px rgba(0,0,0,.35);"></div>
<svg class="a" style="left:1647px;top:99px;" width="14" height="14" viewBox="0 0 14 14"><path d="M2 3 H5 A1.6 1.6 0 1 1 8 3 H11 V6 A1.6 1.6 0 1 1 11 9 V12 H8 A1.6 1.6 0 1 0 5 12 H2 V9 A1.6 1.6 0 1 0 2 6 Z" fill="#fff"/></svg>
<svg class="a" style="left:1709px;top:98px;" width="14" height="15" viewBox="0 0 14 15"><g fill="none" stroke="#d8d8d8" stroke-width="1.1"><path d="M4.6 3.6 A5.2 5.2 0 1 0 9.4 3.6"/><circle cx="7" cy="8.4" r="2.4"/><path d="M7 1 V8" stroke-width="1.5"/></g></svg>
<svg class="a" style="left:1771px;top:100px;" width="14" height="12" viewBox="0 0 14 12"><g fill="none" stroke="#d8d8d8" stroke-width="1.1"><path d="M4 3 L1.2 6 L4 9 M10 3 L12.8 6 L10 9"/><path d="M4.5 6 H9.5" stroke-dasharray="1.2 1"/></g></svg>
<div class="t" style="left:1828.5px;top:101.40px;font-size:11px;line-height:11px;color:#fff;font-weight:700;letter-spacing:-0.584px;">Kpis</div>
<svg class="a" style="left:1843px;top:91px;" width="16" height="16" viewBox="0 0 16 16"><circle cx="7.8" cy="7.2" r="7" fill="#757575"/></svg>
<div class="t" style="left:1848.4px;top:94.46px;font-size:8.5px;line-height:8.5px;color:#000;font-weight:700;">2</div>
<svg class="a" style="left:1882px;top:98px;" width="15" height="15" viewBox="0 0 15 15"><g fill="none" stroke="#d8d8d8" stroke-width="1.1"><path d="M9 12.6 H2.2 V3 H12.4 V7"/><path d="M5 3 V1.6 H9.6 V3"/><path d="M7.5 10 L9.5 12 L13.2 8"/></g></svg>
</div>
<div class="a" style="left:354px;top:127px;width:32px;height:812px;background:#cecece;"></div>
<div class="t" style="left:363.4px;top:969.6px;transform-origin:0 0;transform:rotate(-90deg);font-size:15px;line-height:15px;font-weight:700;letter-spacing:3.5px;color:#111;">PROPERTIES</div>
<div class="a" style="left:386px;top:127px;width:1527px;height:27px;background:#dcdcdc;"></div>
<svg class="a" style="left:398px;top:129px;" width="18" height="16" viewBox="0 0 18 16"><path d="M16 8 H2.8 M8.2 2.2 L2.4 8 L8.2 13.8" fill="none" stroke="#111" stroke-width="1.9"/></svg>
<svg class="a" style="left:420.4px;top:127.5px;" width="20" height="20" viewBox="0 0 20 20"><g stroke="#aee3f6" stroke-width="0.8"><path d="M10 10 L4.4 4.4 M10 10 L16.8 2.2 M10 10 L4.9 15.4 M10 10 L15.8 16.2"/></g><g fill="#17c0e6"><rect x="3.00" y="3.00" width="2.8" height="2.8"/><rect x="15.20" y="0.80" width="3.2" height="3.2"/><rect x="3.50" y="14.00" width="2.8" height="2.8"/><rect x="13.70" y="14.10" width="4.2" height="4.2"/></g><g fill="#2f6df6"><rect x="7.50" y="7.50" width="5" height="5"/></g><g fill="#f9b56b"><rect x="8.10" y="4.10" width="1" height="1"/><rect x="10.15" y="4.95" width="0.9" height="0.9"/><rect x="4.60" y="9.10" width="1" height="1"/><rect x="15.30" y="6.70" width="1" height="1"/><rect x="13.90" y="10.40" width="1" height="1"/><rect x="9.30" y="14.50" width="1" height="1"/><rect x="6.80" y="13.20" width="0.8" height="0.8"/><rect x="12.20" y="7.00" width="0.8" height="0.8"/></g></svg>
<div class="t" style="left:445px;top:131.81px;font-size:11.5px;line-height:11.5px;color:#111;font-weight:700;letter-spacing:0.011px;">GET /dev/rest/being/tree - /dev/rest/being/tree (demo.app.priax.io)</div>
<div class="a" style="left:817px;top:128px;width:1px;height:22px;background:#c6c6c6;"></div>
<svg class="a" style="left:833.5px;top:128px;" width="18" height="18" viewBox="0 0 18 18"><rect x="3.6" y="3.6" width="10.8" height="10.8" rx="1.6" fill="none" stroke="#111" stroke-width="1.9"/><rect x="7" y="7" width="4" height="4" fill="none" stroke="#111" stroke-width="1.6"/><g stroke="#111" stroke-width="1.7"><path d="M6.6 0.8 V3.4 M11.4 0.8 V3.4 M6.6 14.6 V17.2 M11.4 14.6 V17.2 M0.8 6.6 H3.4 M0.8 11.4 H3.4 M14.6 6.6 H17.2 M14.6 11.4 H17.2"/></g></svg>
<div class="t" style="left:859px;top:131.51px;font-size:12px;line-height:12px;color:#222;letter-spacing:-0.053px;">DN: GET /dev/rest/being/tree - /dev/rest/being/tree (demo.app.priax.io).wildfly.demo.SP-PriaxCoreCluster-01:sa-east-1:991717467197</div>
<div class="a" style="left:386px;top:154px;width:1527px;height:31px;background:#eeeeee;"></div>
<div class="a" style="left:386px;top:184px;width:142px;height:1.2px;background:#0a2850;"></div>
<div class="t" style="left:432px;top:162.23px;font-size:13px;line-height:13px;color:#0a2850;letter-spacing:0.130px;">Transactions</div>
<svg class="a" style="left:570.0px;top:159.79999999999998px;" width="16.8" height="16.8" viewBox="0 0 16.8 16.8"><g transform="translate(8.4,8.4)"><path d="M-2.52 -4.44 L-1.85 -7.40 L1.85 -7.40 L2.52 -4.44 Z" transform="rotate(0)" fill="#444"/><path d="M-2.52 -4.44 L-1.85 -7.40 L1.85 -7.40 L2.52 -4.44 Z" transform="rotate(60)" fill="#444"/><path d="M-2.52 -4.44 L-1.85 -7.40 L1.85 -7.40 L2.52 -4.44 Z" transform="rotate(120)" fill="#444"/><path d="M-2.52 -4.44 L-1.85 -7.40 L1.85 -7.40 L2.52 -4.44 Z" transform="rotate(180)" fill="#444"/><path d="M-2.52 -4.44 L-1.85 -7.40 L1.85 -7.40 L2.52 -4.44 Z" transform="rotate(240)" fill="#444"/><path d="M-2.52 -4.44 L-1.85 -7.40 L1.85 -7.40 L2.52 -4.44 Z" transform="rotate(300)" fill="#444"/><path fill-rule="evenodd" fill="#444" d="M0 -5.48 A5.48 5.48 0 1 0 0.01 -5.48 Z M0 -2.66 A2.66 2.66 0 1 1 -0.01 -2.66 Z"/></g></svg>
<div class="t" style="left:593px;top:162.23px;font-size:13px;line-height:13px;color:#666;letter-spacing:0.175px;">Properties</div>
<div class="a" style="left:386px;top:185px;width:1527px;height:46px;background:#fafafa;"></div>
<div class="a" style="left:1869px;top:185px;width:44px;height:46px;background:#fff;"></div>
<div class="a" style="left:386px;top:231px;width:1527px;height:1px;background:#cfcfcf;"></div>
<svg class="a" style="left:398px;top:197.5px;" width="18" height="16" viewBox="0 0 18 16"><path d="M16 8 H2.8 M8.2 2.2 L2.4 8 L8.2 13.8" fill="none" stroke="#111" stroke-width="1.9"/></svg>
<div class="a" style="left:422px;top:196px;width:1px;height:21px;background:#d0d0d0;"></div>
<svg class="a" style="left:430.5px;top:199px;" width="14" height="14" viewBox="0 0 14 14"><rect x="2.6" y="2.6" width="8.8" height="8.8" rx="1.2" fill="none" stroke="#808080" stroke-width="0.9"/><rect x="5.8" y="5.8" width="2.4" height="2.4" fill="#808080"/><g stroke="#808080" stroke-width="0.8"><path d="M5.2 1 V2.6 M8.8 1 V2.6 M5.2 11.4 V13 M8.8 11.4 V13 M1 5.2 H2.6 M1 8.8 H2.6 M11.4 5.2 H13 M11.4 8.8 H13"/></g></svg>
<div class="t" style="left:452px;top:193.88px;font-size:10px;line-height:10px;color:#333;letter-spacing:0.281px;">TraceId</div>
<div class="t" style="left:452px;top:206.61px;font-size:11.5px;line-height:11.5px;color:#222;letter-spacing:-0.064px;">feb3cb05a5cbc9cb7ef57ac210d6e21e</div>
<div class="a" style="left:666px;top:196px;width:1px;height:21px;background:#d0d0d0;"></div>
<svg class="a" style="left:679px;top:199px;" width="14" height="14" viewBox="0 0 14 14"><path d="M3 1.6 V13" stroke="#707070" stroke-width="1.5"/><path d="M3 2 H8 L8.4 3.2 H12 V9.4 H8 L7.6 8.2 H3 Z" fill="#707070"/></svg>
<div class="t" style="left:701px;top:193.88px;font-size:10px;line-height:10px;color:#333;letter-spacing:0.411px;">First Time</div>
<div class="t" style="left:701px;top:206.61px;font-size:11.5px;line-height:11.5px;color:#222;letter-spacing:-0.452px;">01/04/2025 12:21:52.881</div>
<div class="a" style="left:843px;top:196px;width:1px;height:21px;background:#d0d0d0;"></div>
<svg class="a" style="left:850.5px;top:198px;" width="16" height="16" viewBox="0 0 16 16"><circle cx="8" cy="8" r="7.3" fill="#707070"/><path d="M8 3.6 V8.2 L11 10" fill="none" stroke="#fafafa" stroke-width="1.2"/></svg>
<div class="t" style="left:873px;top:193.88px;font-size:10px;line-height:10px;color:#333;letter-spacing:0.350px;">Last Time</div>
<div class="t" style="left:873px;top:206.61px;font-size:11.5px;line-height:11.5px;color:#222;letter-spacing:-0.430px;">01/04/2025 12:21:53.222</div>
<div class="a" style="left:1015px;top:196px;width:1px;height:21px;background:#d0d0d0;"></div>
<svg class="a" style="left:1027.0px;top:198.0px;" width="14.0" height="16.0" viewBox="0 0 14 16"><path d="M2 1 H8.6 L12.2 4.6 V15 H2 Z" fill="#7a7a7a"/><path d="M8.4 1 V4.8 H12.2" fill="none" stroke="#fafafa" stroke-width="0.7"/><path d="M4.2 8.2 H10 M4.2 10.4 H10 M4.2 12.6 H10" stroke="#fafafa" stroke-width="0.9"/></svg>
<div class="t" style="left:1049px;top:191.88px;font-size:10px;line-height:10px;color:#333;letter-spacing:0.365px;">Hostname</div>
<div class="t" style="left:1049px;top:204.61px;font-size:11.5px;line-height:11.5px;color:#222;letter-spacing:0.272px;">wildfly-54b6787d65</div>
<div class="a" style="left:1268px;top:196px;width:1px;height:21px;background:#d0d0d0;"></div>
<svg class="a" style="left:1280.0px;top:198.0px;" width="16.0" height="16.0" viewBox="-0.5 0 16 16"><path d="M14.6 12.7 L8.5 6.6 C9.1 5.1 8.8 3.3 7.5 2 C6.2 0.7 4.2 0.4 2.6 1.1 L5.5 4 L3.5 6 L0.5 3.1 C-0.3 4.7 0.1 6.7 1.4 8 C2.7 9.3 4.5 9.6 6 9 L12.1 15.1 C12.4 15.4 12.8 15.4 13.1 15.1 L14.6 13.6 C14.9 13.4 14.9 12.9 14.6 12.7 Z" fill="#5c5c5c"/></svg>
<div class="t" style="left:1302px;top:193.88px;font-size:10px;line-height:10px;color:#333;letter-spacing:0.267px;">Service Name</div>
<div class="t" style="left:1302px;top:206.61px;font-size:11.5px;line-height:11.5px;color:#222;letter-spacing:0.598px;">wildfly</div>
<div class="a" style="left:1522px;top:196px;width:1px;height:21px;background:#d0d0d0;"></div>
<svg class="a" style="left:1533.5px;top:199px;" width="14" height="14" viewBox="0 0 14 14"><rect x="2.6" y="2.6" width="8.8" height="8.8" rx="1.2" fill="none" stroke="#808080" stroke-width="0.9"/><rect x="5.8" y="5.8" width="2.4" height="2.4" fill="#808080"/><g stroke="#808080" stroke-width="0.8"><path d="M5.2 1 V2.6 M8.8 1 V2.6 M5.2 11.4 V13 M8.8 11.4 V13 M1 5.2 H2.6 M1 8.8 H2.6 M11.4 5.2 H13 M11.4 8.8 H13"/></g></svg>
<div class="t" style="left:1555px;top:193.88px;font-size:10px;line-height:10px;color:#333;letter-spacing:0.331px;">Operation Name</div>
<div class="t" style="left:1555px;top:206.61px;font-size:11.5px;line-height:11.5px;color:#222;letter-spacing:0.184px;">GET /dev/rest/being/tree</div>
<div class="a" style="left:1774px;top:196px;width:1px;height:21px;background:#d0d0d0;"></div>
<svg class="a" style="left:1879px;top:196px;" width="20" height="16" viewBox="0 0 20 16"><path d="M1.5 3.2 H18.5 M4.8 8 H15.2 M8.2 12.6 H11.8" stroke="#0a2850" stroke-width="1.7"/></svg>
<div class="a" style="left:386px;top:246px;width:1.5px;height:672px;background:#ebebeb;"></div>
<div class="t" style="left:390.8px;top:248.57px;font-size:9px;line-height:9px;color:#555;letter-spacing:-0.501px;">0ms</div>
<div class="a" style="left:463px;top:246px;width:1.5px;height:672px;background:#ebebeb;"></div>
<div class="t" style="left:468.26000000000005px;top:248.57px;font-size:9px;line-height:9px;color:#555;letter-spacing:-0.802px;">20ms</div>
<div class="a" style="left:541px;top:246px;width:1.5px;height:672px;background:#ebebeb;"></div>
<div class="t" style="left:545.72px;top:248.57px;font-size:9px;line-height:9px;color:#555;letter-spacing:-0.802px;">40ms</div>
<div class="a" style="left:615px;top:246px;width:1.5px;height:672px;background:#ebebeb;"></div>
<div class="t" style="left:619.307px;top:248.57px;font-size:9px;line-height:9px;color:#555;letter-spacing:-0.802px;">59ms</div>
<div class="a" style="left:692px;top:246px;width:1.5px;height:672px;background:#ebebeb;"></div>
<div class="t" style="left:696.767px;top:248.57px;font-size:9px;line-height:9px;color:#555;letter-spacing:-0.802px;">79ms</div>
<div class="a" style="left:769px;top:246px;width:1.5px;height:672px;background:#ebebeb;"></div>
<div class="t" style="left:774.227px;top:248.57px;font-size:9px;line-height:9px;color:#555;letter-spacing:-0.802px;">99ms</div>
<div class="a" style="left:847px;top:246px;width:1.5px;height:672px;background:#ebebeb;"></div>
<div class="t" style="left:851.6869999999999px;top:248.57px;font-size:9px;line-height:9px;color:#555;letter-spacing:-0.569px;">119ms</div>
<div class="a" style="left:920px;top:246px;width:1.5px;height:672px;background:#ebebeb;"></div>
<div class="t" style="left:925.274px;top:248.57px;font-size:9px;line-height:9px;color:#555;letter-spacing:-0.703px;">138ms</div>
<div class="a" style="left:998px;top:246px;width:1.5px;height:672px;background:#ebebeb;"></div>
<div class="t" style="left:1002.734px;top:248.57px;font-size:9px;line-height:9px;color:#555;letter-spacing:-0.703px;">158ms</div>
<div class="a" style="left:1075px;top:246px;width:1.5px;height:672px;background:#ebebeb;"></div>
<div class="t" style="left:1080.194px;top:248.57px;font-size:9px;line-height:9px;color:#555;letter-spacing:-0.703px;">178ms</div>
<div class="a" style="left:1153px;top:246px;width:1.5px;height:672px;background:#ebebeb;"></div>
<div class="t" style="left:1157.654px;top:248.57px;font-size:9px;line-height:9px;color:#555;letter-spacing:-0.703px;">198ms</div>
<div class="a" style="left:1230px;top:246px;width:1.5px;height:672px;background:#ebebeb;"></div>
<div class="t" style="left:1235.114px;top:248.57px;font-size:9px;line-height:9px;color:#555;letter-spacing:-0.703px;">218ms</div>
<div class="a" style="left:1304px;top:246px;width:1.5px;height:672px;background:#ebebeb;"></div>
<div class="t" style="left:1308.701px;top:248.57px;font-size:9px;line-height:9px;color:#555;letter-spacing:-0.703px;">237ms</div>
<div class="a" style="left:1381px;top:246px;width:1.5px;height:672px;background:#ebebeb;"></div>
<div class="t" style="left:1386.161px;top:248.57px;font-size:9px;line-height:9px;color:#555;letter-spacing:-0.703px;">257ms</div>
<div class="a" style="left:1459px;top:246px;width:1.5px;height:672px;background:#ebebeb;"></div>
<div class="t" style="left:1463.621px;top:248.57px;font-size:9px;line-height:9px;color:#555;letter-spacing:-0.703px;">277ms</div>
<div class="a" style="left:1536px;top:246px;width:1.5px;height:672px;background:#ebebeb;"></div>
<div class="t" style="left:1541.0810000000001px;top:248.57px;font-size:9px;line-height:9px;color:#555;letter-spacing:-0.703px;">297ms</div>
<div class="a" style="left:1610px;top:246px;width:1.5px;height:672px;background:#ebebeb;"></div>
<div class="t" style="left:1614.6680000000001px;top:248.57px;font-size:9px;line-height:9px;color:#555;letter-spacing:-0.703px;">316ms</div>
<div class="a" style="left:1687px;top:246px;width:1.5px;height:672px;background:#ebebeb;"></div>
<div class="t" style="left:1692.128px;top:248.57px;font-size:9px;line-height:9px;color:#555;letter-spacing:-0.703px;">336ms</div>
<div class="a" style="left:1765px;top:246px;width:1.5px;height:672px;background:#ebebeb;"></div>
<div class="t" style="left:1769.588px;top:248.57px;font-size:9px;line-height:9px;color:#555;letter-spacing:-0.929px;">356m</div>
<div class="a" style="left:386px;top:246.5px;width:2px;height:16.5px;background:#5c5c5c;"></div>
<svg class="a" style="left:386px;top:258px;" width="60" height="40" viewBox="0 0 60 40"><path d="M0 36.6 L2.4 35.2 L3.4 33 L6 32 L7 28.4 L9.4 27.4 L10.4 23.4 L12.8 22 L13.6 18.4 L16 17 L17 12.6 L19.4 10.6 L20.4 8 L23 6.6 L25 5.2 L29 4.2 L34 3.6 L60 3.2 V36.6 Z" fill="#d6d6d6"/></svg>
<div class="t" style="left:391px;top:301.49px;font-size:10.5px;line-height:10.5px;color:#222;letter-spacing:-0.946px;">0ms</div>
<div class="a" style="left:386px;top:318px;width:1514px;height:29px;background:#f0f0f0;"></div>
<svg class="a" style="left:394px;top:329px;" width="12" height="10" viewBox="0 0 12 10"><path d="M1 1.5 H10 L5.5 8.5 Z" fill="#111"/></svg>
<div class="t" style="left:410px;top:327.44px;font-size:14px;line-height:14px;color:#111;">waterfall</div>
<div class="a" style="left:386px;top:350px;width:300px;height:27px;background:#b6cf9d;border-bottom:1.5px solid #7fc06a;box-sizing:border-box;"></div>
<div class="t" style="left:391.5px;top:359.93px;font-size:13px;line-height:13px;color:#111;">GET /dev/rest/being/tree</div>
<div class="a" style="left:386px;top:537px;width:1514px;height:30px;background:#f0f0f0;"></div>
<svg class="a" style="left:394px;top:548px;" width="12" height="10" viewBox="0 0 12 10"><path d="M1 1.5 H10 L5.5 8.5 Z" fill="#111"/></svg>
<div class="t" style="left:410px;top:546.54px;font-size:14px;line-height:14px;color:#111;">flamegraph</div>
<div class="a" style="left:386px;top:570px;width:1514px;height:26px;background:#e0e0e0;"></div>
<div class="t" style="left:392px;top:579.73px;font-size:13.5px;line-height:13.5px;color:#111;">TraceID</div>
<div class="a" style="left:392.5px;top:598px;width:300px;height:26.5px;background:#b6cf9d;"></div>
<div class="t" style="left:398px;top:607.93px;font-size:13px;line-height:13px;color:#111;">GET /dev/rest/being/tree</div>
<div class="a" style="left:399px;top:625.5px;width:300px;height:28px;background:#c59fd0;box-sizing:border-box;border:1.2px solid #58a55c;"></div>
<div class="t" style="left:404px;top:634.93px;font-size:13px;line-height:13px;color:#111;">BeingResourceRESTService.lookupTree</div>
<div class="a" style="left:405.5px;top:654.5px;width:300px;height:26.5px;background:#c59fd0;"></div>
<div class="t" style="left:410.5px;top:662.93px;font-size:13px;line-height:13px;color:#111;">SELECT</div>
<div class="a" style="left:412px;top:682px;width:300px;height:26.5px;background:#a4a5d0;"></div>
<div class="t" style="left:417.5px;top:690.93px;font-size:13px;line-height:13px;color:#111;">S...</div>
<div class="a" style="left:435px;top:255px;width:1470px;height:653px;background:#dfdfdf;border-radius:4px;box-shadow:0 3px 7px rgba(0,0,0,.3),0 0 2px rgba(0,0,0,.22);z-index:10;overflow:hidden;">
<div class="a" style="left:0px;top:0px;width:315px;height:653px;background:#eeeeee;"></div>
<div class="a" style="left:1463px;top:0px;width:7px;height:337px;background:#a9a9a9;border-radius:0 3px 3px 3px;"></div>
<div class="a" style="left:9px;top:9px;width:296.5px;height:29.5px;background:#d4d4d4;border-radius:6px;"></div>
<svg class="a" style="left:14px;top:16px;" width="14" height="14" viewBox="0 0 14 14"><path d="M4.5 2.6 L9.3 7 L4.5 11.4" fill="none" stroke="#111" stroke-width="1.7"/></svg>
<div class="t" style="left:36px;top:16.35px;font-size:14.5px;line-height:14.5px;color:#111;font-weight:700;letter-spacing:0.250px;">Details</div>
<svg class="a" style="left:282px;top:15px;" width="16" height="16" viewBox="0 0 16 16"><path d="M2.6 2.6 L13.4 13.4 M13.4 2.6 L2.6 13.4" stroke="#111" stroke-width="1.6"/></svg>
<div class="t" style="left:13.600000000000023px;top:59.05px;font-size:14.5px;line-height:14.5px;color:#333;letter-spacing:0.143px;">BeingResourceRESTService.lookupTree</div>
<div class="a" style="left:9px;top:84.30000000000001px;width:296.5px;height:147px;background:#f2f2f2;border-radius:8px;"></div>
<div class="a" style="left:9px;top:245px;width:296.5px;height:238.5px;background:#ffffff;border-radius:8px;"></div>
<div class="t" style="left:43px;top:98.79px;font-size:10px;line-height:10px;color:#333;letter-spacing:0.238px;">Operation Name</div>
<div class="t" style="left:43px;top:111.19px;font-size:11.7px;line-height:11.7px;color:#222;letter-spacing:0.584px;">BeingResourceRESTService.lookupTree</div>
<div class="t" style="left:43px;top:144.79px;font-size:10px;line-height:10px;color:#333;letter-spacing:0.080px;">Type</div>
<div class="t" style="left:43px;top:157.19px;font-size:11.7px;line-height:11.7px;color:#222;letter-spacing:0.388px;">SPAN_KIND_INTERNAL</div>
<div class="t" style="left:43px;top:190.79px;font-size:10px;line-height:10px;color:#333;letter-spacing:0.183px;">Service Name</div>
<div class="t" style="left:43px;top:203.19px;font-size:11.7px;line-height:11.7px;color:#222;letter-spacing:1.006px;">wildfly</div>
<div class="t" style="left:43px;top:259.78px;font-size:10px;line-height:10px;color:#333;letter-spacing:0.117px;">SpanId</div>
<div class="t" style="left:43px;top:272.19px;font-size:11.7px;line-height:11.7px;color:#222;letter-spacing:0.759px;">b01f7ddaeabbb982</div>
<div class="t" style="left:43px;top:305.78px;font-size:10px;line-height:10px;color:#333;letter-spacing:0.153px;">TraceId</div>
<div class="t" style="left:43px;top:318.19px;font-size:11.7px;line-height:11.7px;color:#222;letter-spacing:0.524px;">feb3cb05a5cbc9cb7ef57ac210d6e21e</div>
<div class="t" style="left:43px;top:351.78px;font-size:10px;line-height:10px;color:#333;letter-spacing:0.343px;">Start Time</div>
<div class="t" style="left:43px;top:364.19px;font-size:11.7px;line-height:11.7px;color:#222;letter-spacing:-0.102px;">01/04/2025 12:21:53 211</div>
<div class="t" style="left:43px;top:397.78px;font-size:10px;line-height:10px;color:#333;letter-spacing:0.170px;">End Time</div>
<div class="t" style="left:43px;top:410.19px;font-size:11.7px;line-height:11.7px;color:#222;letter-spacing:-0.032px;">01/04/2025 12:21:53 261</div>
<div class="t" style="left:43px;top:443.78px;font-size:10px;line-height:10px;color:#333;letter-spacing:0.325px;">Duration (ms)</div>
<div class="t" style="left:43px;top:456.19px;font-size:11.7px;line-height:11.7px;color:#222;letter-spacing:0.463px;">50.783556ms</div>
<svg class="a" style="left:21px;top:102px;" width="14" height="14" viewBox="0 0 14 14"><rect x="2.6" y="2.6" width="8.8" height="8.8" rx="1.2" fill="none" stroke="#444" stroke-width="0.9"/><rect x="5.8" y="5.8" width="2.4" height="2.4" fill="#444"/><g stroke="#444" stroke-width="0.8"><path d="M5.2 1 V2.6 M8.8 1 V2.6 M5.2 11.4 V13 M8.8 11.4 V13 M1 5.2 H2.6 M1 8.8 H2.6 M11.4 5.2 H13 M11.4 8.8 H13"/></g></svg>
<svg class="a" style="left:20.19999999999999px;top:148.2px;" width="15.6" height="15.6" viewBox="0 0 15.6 15.6"><g transform="translate(7.8,7.8)"><path d="M-2.31 -4.08 L-1.70 -6.80 L1.70 -6.80 L2.31 -4.08 Z" transform="rotate(0)" fill="#111"/><path d="M-2.31 -4.08 L-1.70 -6.80 L1.70 -6.80 L2.31 -4.08 Z" transform="rotate(60)" fill="#111"/><path d="M-2.31 -4.08 L-1.70 -6.80 L1.70 -6.80 L2.31 -4.08 Z" transform="rotate(120)" fill="#111"/><path d="M-2.31 -4.08 L-1.70 -6.80 L1.70 -6.80 L2.31 -4.08 Z" transform="rotate(180)" fill="#111"/><path d="M-2.31 -4.08 L-1.70 -6.80 L1.70 -6.80 L2.31 -4.08 Z" transform="rotate(240)" fill="#111"/><path d="M-2.31 -4.08 L-1.70 -6.80 L1.70 -6.80 L2.31 -4.08 Z" transform="rotate(300)" fill="#111"/><path fill-rule="evenodd" fill="#111" d="M0 -5.03 A5.03 5.03 0 1 0 0.01 -5.03 Z M0 -2.45 A2.45 2.45 0 1 1 -0.01 -2.45 Z"/></g></svg>
<svg class="a" style="left:20.399999999999977px;top:194.89999999999998px;" width="15.2" height="15.2" viewBox="-0.5 0 16 16"><path d="M14.6 12.7 L8.5 6.6 C9.1 5.1 8.8 3.3 7.5 2 C6.2 0.7 4.2 0.4 2.6 1.1 L5.5 4 L3.5 6 L0.5 3.1 C-0.3 4.7 0.1 6.7 1.4 8 C2.7 9.3 4.5 9.6 6 9 L12.1 15.1 C12.4 15.4 12.8 15.4 13.1 15.1 L14.6 13.6 C14.9 13.4 14.9 12.9 14.6 12.7 Z" fill="#111"/></svg>
<svg class="a" style="left:21.5px;top:262.5px;" width="13" height="15" viewBox="0 0 13 15"><path d="M1 0.8 H8 L12 4.8 V14.4 H1 Z" fill="#111"/><path d="M7.8 0.8 V5 H12" fill="none" stroke="#fff" stroke-width="0.8"/><path d="M3.2 8 H9.8 M3.2 10.2 H9.8 M3.2 12.4 H7.6" stroke="#fff" stroke-width="1"/></svg>
<svg class="a" style="left:20px;top:308px;" width="17" height="17" viewBox="0 0 17 17"><g fill="none" stroke="#555" stroke-width="0.9"><path d="M8 14.2 H1.8 V3 H13.6 V8"/><path d="M5 3 V1.6 H10.4 V3"/><circle cx="10.8" cy="10.6" r="2.1"/><path d="M12.4 12.2 L14.4 14.2"/></g><rect x="5" y="1.4" width="5.4" height="2.6" fill="#555"/></svg>
<svg class="a" style="left:21px;top:354px;" width="14" height="16" viewBox="0 0 14 16"><rect x="0.9" y="2.6" width="12.2" height="12" rx="1" fill="#fff" stroke="#8a8a8a" stroke-width="0.8"/><rect x="0.5" y="2.2" width="13" height="4.6" fill="#111"/><path d="M3.6 0.8 V3 M10.4 0.8 V3" stroke="#111" stroke-width="1.4"/><rect x="8" y="9.8" width="2.6" height="2.6" fill="#111"/></svg>
<svg class="a" style="left:21px;top:400px;" width="14" height="16" viewBox="0 0 14 16"><rect x="0.9" y="2.6" width="12.2" height="12" rx="1" fill="#fff" stroke="#8a8a8a" stroke-width="0.8"/><rect x="0.5" y="2.2" width="13" height="4.6" fill="#111"/><path d="M3.6 0.8 V3 M10.4 0.8 V3" stroke="#111" stroke-width="1.4"/><rect x="8" y="9.8" width="2.6" height="2.6" fill="#111"/></svg>
<svg class="a" style="left:20px;top:445px;" width="16" height="18" viewBox="0 0 16 18"><circle cx="8" cy="10.2" r="6.6" fill="#111"/><path d="M6 1.2 H10" stroke="#111" stroke-width="1.5"/><path d="M8 6 V10" stroke="#fff" stroke-width="1"/></svg>
<div class="t" style="left:328.5px;top:14.80px;font-size:11px;line-height:11px;color:#111;font-weight:700;letter-spacing:-0.565px;">Raw Data</div>
<style>.j{font-family:"DejaVu Sans Mono","Liberation Mono",monospace;font-size:10.72px;line-height:10.72px}</style>
<div class="t j" style="left:341px;top:37.21px;"><span style="color:#4E187C">traceId</span><span style="color:#999">: </span><span style="color:#FF6B6B">&quot;feb3cb05a5cbc9cb7ef57ac210d6e21e&quot;</span></div>
<div class="t j" style="left:341px;top:59.31px;"><span style="color:#4E187C">droppedLinksCount</span><span style="color:#999">: </span><span style="color:#009688">0</span></div>
<div class="t j" style="left:341px;top:81.91px;"><span style="color:#4E187C">kind</span><span style="color:#999">: </span><span style="color:#FF6B6B">&quot;SPAN_KIND_INTERNAL&quot;</span></div>
<div class="t j" style="left:341px;top:104.31px;"><span style="color:#4E187C">droppedEventsCount</span><span style="color:#999">: </span><span style="color:#009688">0</span></div>
<div class="t j" style="left:341px;top:127.11px;"><span style="color:#4E187C">traceGroupFields</span><span style="color:#999">: </span></div>
<div class="t" style="left:329.1px;top:126.51px;font-size:8px;line-height:10.72px;color:#787878;font-family:'DejaVu Sans',sans-serif;">&#9662;</div>
<div class="t j" style="left:365px;top:148.41px;"><span style="color:#4E187C">endTime</span><span style="color:#999">: </span><span style="color:#FF6B6B">&quot;2025-04-01T15:21:53.284422484Z&quot;</span></div>
<div class="t j" style="left:365px;top:170.51px;"><span style="color:#4E187C">durationInNanos</span><span style="color:#999">: </span><span style="color:#009688">403251484</span></div>
<div class="t j" style="left:365px;top:193.01px;"><span style="color:#4E187C">statusCode</span><span style="color:#999">: </span><span style="color:#009688">0</span></div>
<div class="t j" style="left:341px;top:218.01px;"><span style="color:#4E187C">traceGroup</span><span style="color:#999">: </span><span style="color:#FF6B6B">&quot;GET /dev/rest/being/tree&quot;</span></div>
<div class="t j" style="left:341px;top:240.21px;"><span style="color:#4E187C">serviceName</span><span style="color:#999">: </span><span style="color:#FF6B6B">&quot;wildfly&quot;</span></div>
<div class="t j" style="left:341px;top:263.21px;"><span style="color:#4E187C">parentSpanId</span><span style="color:#999">: </span><span style="color:#FF6B6B">&quot;0827a4cd3e8c6001&quot;</span></div>
<div class="t j" style="left:341px;top:285.41px;"><span style="color:#4E187C">spanId</span><span style="color:#999">: </span><span style="color:#FF6B6B">&quot;b01f7ddaeabbb982&quot;</span></div>
<div class="t j" style="left:341px;top:308.01px;"><span style="color:#4E187C">traceState</span><span style="color:#999">: </span><span style="color:#FF6B6B">&quot;&quot;</span></div>
<div class="t j" style="left:341px;top:330.21px;"><span style="color:#4E187C">name</span><span style="color:#999">: </span><span style="color:#FF6B6B">&quot;BeingResourceRESTService.lookupTree&quot;</span></div>
<div class="t j" style="left:341px;top:353.21px;"><span style="color:#4E187C">startTime</span><span style="color:#999">: </span><span style="color:#FF6B6B">&quot;2025-04-01T15:21:53.211840267Z&quot;</span></div>
<div class="t j" style="left:341px;top:375.11px;"><span style="color:#4E187C">links</span><span style="color:#999">: </span></div>
<div class="t" style="left:329.1px;top:374.51px;font-size:8px;line-height:10.72px;color:#787878;font-family:'DejaVu Sans',sans-serif;">&#9662;</div>
<div class="t j" style="left:341px;top:398.11px;"><span style="color:#4E187C">endTime</span><span style="color:#999">: </span><span style="color:#FF6B6B">&quot;2025-04-01T15:21:53.262623823Z&quot;</span></div>
<div class="t j" style="left:341px;top:420.21px;"><span style="color:#4E187C">droppedAttributesCount</span><span style="color:#999">: </span><span style="color:#009688">0</span></div>
<div class="t j" style="left:341px;top:443.01px;"><span style="color:#4E187C">durationInNanos</span><span style="color:#999">: </span><span style="color:#009688">50783556</span></div>
<div class="t j" style="left:341px;top:465.11px;"><span style="color:#4E187C">events</span><span style="color:#999">: </span></div>
<div class="t" style="left:329.1px;top:464.51px;font-size:8px;line-height:10.72px;color:#787878;font-family:'DejaVu Sans',sans-serif;">&#9662;</div>
<div class="t j" style="left:341px;top:488.31px;"><span style="color:#4E187C">resource.attributes.process@command_args</span><span style="color:#999">: </span><span style="color:#FF6B6B">&quot;[&quot;/usr/lib/jvm/java-11-openjdk-11.0.8.10-0.el7_8.x86_64/bin/java&quot;,&quot;-D[Standalone]&quot;,&quot;-server&quot;,&quot;-Xms1g&quot;,&quot;-Xmx1g&quot;,&quot;--add-</span></div>
<div class="t j" style="left:341px;top:506.31px;"><span style="color:#FF6B6B">exports=java.base/sun.nio.ch=ALL-UNNAMED&quot;,&quot;--add-exports=jdk.unsupported/sun.misc=ALL-UNNAMED&quot;,&quot;--add-exports=jdk.unsupported/sun.reflect=ALL-UNNAMED&quot;,&quot;-</span></div>
<div class="t j" style="left:341px;top:524.31px;"><span style="color:#FF6B6B">Dorg.jboss.boot.log.file=/opt/jboss/wildfly/standalone/log/server.log&quot;,&quot;-Dlogging.configuration=file:/opt/jboss/wildfly/standalone/configuration/logging.properties&quot;,&quot;-</span></div>
<div class="t j" style="left:341px;top:542.21px;"><span style="color:#FF6B6B">jar&quot;,&quot;/opt/jboss/wildfly/jboss-modules.jar&quot;,&quot;-mp&quot;,&quot;/opt/jboss/wildfly/modules&quot;,&quot;org.jboss.as.standalone&quot;,&quot;-Djboss.home.dir=/opt/jboss/wildfly&quot;,&quot;-</span></div>
<div class="t j" style="left:341px;top:560.11px;"><span style="color:#FF6B6B">Djboss.server.base.dir=/opt/jboss/wildfly/standalone&quot;]&quot;</span></div>
<div class="t j" style="left:341px;top:582.41px;"><span style="color:#4E187C">resource.attributes.k8s@namespace@name</span><span style="color:#999">: </span><span style="color:#FF6B6B">&quot;demo&quot;</span></div>
<div class="t j" style="left:341px;top:605.01px;"><span style="color:#4E187C">resource.attributes.k8s@container@name</span><span style="color:#999">: </span><span style="color:#FF6B6B">&quot;wildfly&quot;</span></div>
<div class="t j" style="left:341px;top:627.21px;"><span style="color:#4E187C">span.attributes.thread@id</span><span style="color:#999">: </span><span style="color:#009688">13790</span></div>
<div class="t j" style="left:341px;top:649.11px;"><span style="color:#4E187C">resource.attributes.process@pid</span><span style="color:#999">: </span><span style="color:#009688">85</span></div>
</div>
</body></html>
